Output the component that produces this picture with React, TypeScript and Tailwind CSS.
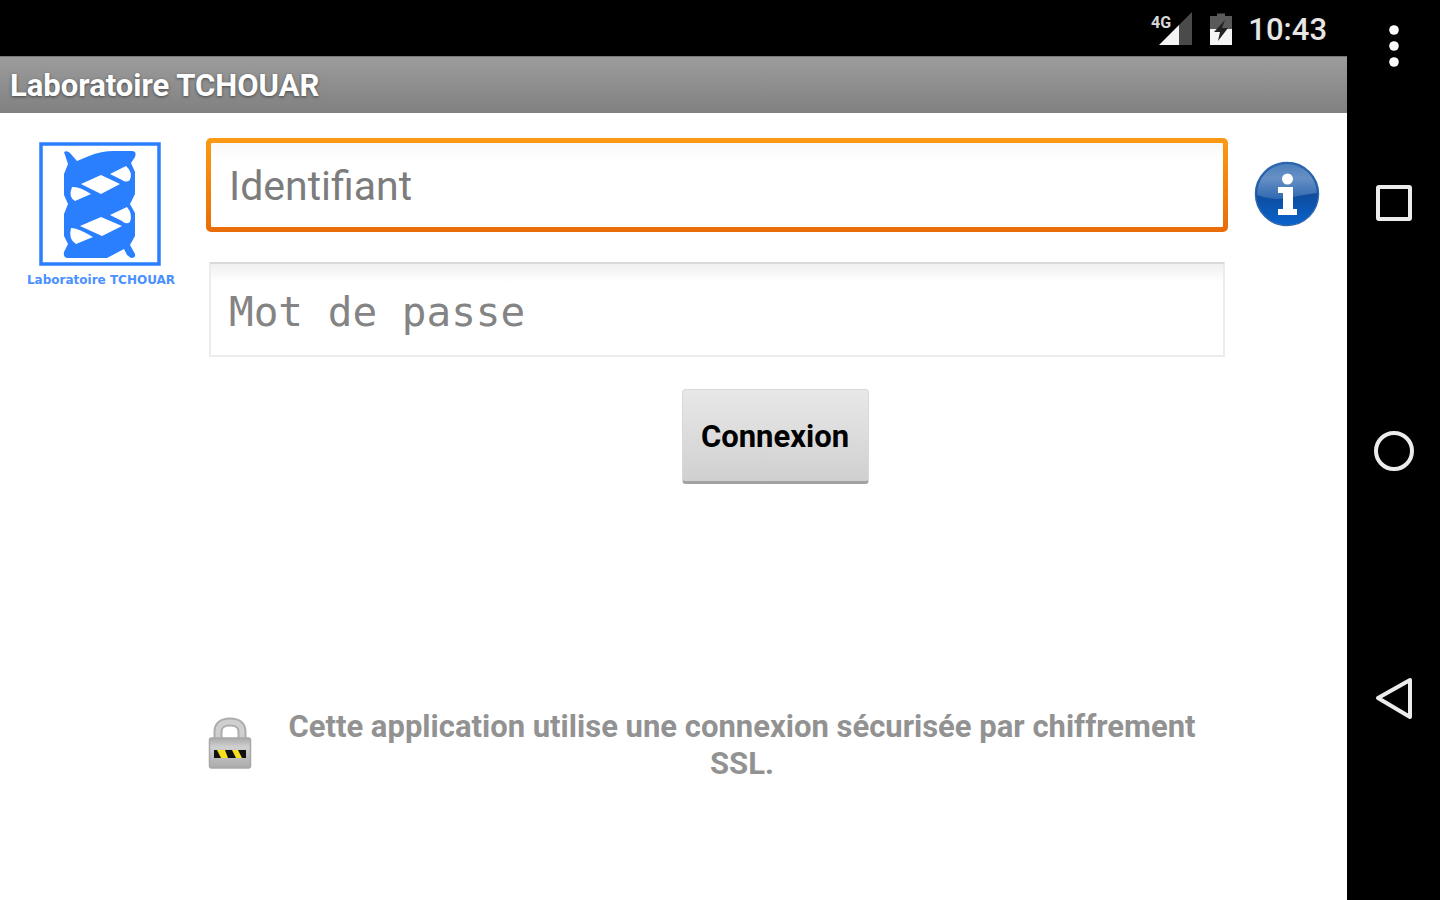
import React from "react";

function SignalIcon() {
  return (
    <svg viewBox="0 0 44 36" className="h-9 w-11" aria-hidden="true">
      <path d="M43 0V33H30V13Z" fill="#4a4a4a" />
      <path d="M30 13V33H10Z" fill="#f4f4f4" />
      <text x="2" y="16" fill="#d8d8d8" fontFamily="Roboto, sans-serif" fontSize="16" fontWeight="700">
        4G
      </text>
    </svg>
  );
}

function BatteryIcon() {
  return (
    <svg viewBox="0 0 24 34" className="h-[34px] w-6" aria-hidden="true">
      <path d="M8 0.500H16V3H23V16H1V3H8Z" fill="#5a5a5a" />
      <path d="M1 16H23V32H1Z" fill="#f4f4f4" />
      <path d="M16 7L5 19H11L9 28L19 15H13Z" fill="#222" />
    </svg>
  );
}

function LogoIcon() {
  return (
    <svg viewBox="0 0 122 124" className="h-[124px] w-[122px]" aria-hidden="true">
      <rect x="2" y="2" width="118" height="120" fill="none" stroke="#2a7fff" strokeWidth="3.500" />
      <path
        d="M25 10Q28 8 31 11L38 19L50 14Q62 9 75 9H93Q98 9 96 15L92 21L96 30V52L91 62L96 71V94L91 103L96 112Q97 116 92 116L88 113L85 107L68 116H29Q24 116 25 110L29 102L25 94V72L29 62L25 53V32L29 22Z"
        fill="#2a7fff"
      />
      <path
        d="M42 42L62 33L81 42L62 52ZM71 32L87 24Q94 30 91 38Q87 41 83 38ZM33 45Q40 44 52 52L36 59Q29 55 33 45ZM41 84L62 75L83 84L63 94ZM71 73L88 65Q94 72 91 80Q87 83 83 79ZM32 86Q39 86 54 95L37 102Q29 97 32 86Z"
        fill="#fff"
      />
    </svg>
  );
}

function InfoIcon() {
  return (
    <svg viewBox="0 0 66 66" className="h-[66px] w-[66px]" aria-hidden="true">
      <defs>
        <linearGradient id="infoBase" x1="0" y1="0" x2="0" y2="1">
          <stop offset="0" stopColor="#2e66ab" />
          <stop offset="0.500" stopColor="#0f4c9c" />
          <stop offset="1" stopColor="#0863cc" />
        </linearGradient>
        <linearGradient id="infoGloss" x1="0" y1="0" x2="0" y2="1">
          <stop offset="0" stopColor="#4d7fbb" />
          <stop offset="0.400" stopColor="#6690c5" />
          <stop offset="1" stopColor="#3068b0" />
        </linearGradient>
      </defs>
      <circle cx="33" cy="33" r="31.500" fill="url(#infoBase)" stroke="#2c66ad" strokeWidth="1.500" />
      <path d="M3 34A30 30 0 0 1 63 32Q48 34 33 37Q18 40 3 34Z" fill="url(#infoGloss)" />
      <circle cx="33.500" cy="18" r="5.500" fill="#fff" />
      <path d="M24 26H39V48H43V54H24V48H29V32H24Z" fill="#fff" />
    </svg>
  );
}

function LockIcon() {
  return (
    <svg viewBox="0 0 44 54" className="h-[54px] w-11 shrink-0" aria-hidden="true">
      <defs>
        <linearGradient id="lockBody" x1="0" y1="0" x2="0" y2="1">
          <stop offset="0" stopColor="#a9a9a9" />
          <stop offset="0.300" stopColor="#d0d0d0" />
          <stop offset="1" stopColor="#aaa" />
        </linearGradient>
        <clipPath id="lockBand">
          <rect x="6" y="34" width="32" height="8" />
        </clipPath>
      </defs>
      <path d="M10 24V16Q10 6 22 6Q34 6 34 16V24" fill="none" stroke="#acacac" strokeWidth="9" />
      <path d="M10 24V16Q10 6 22 6Q34 6 34 16V24" fill="none" stroke="#cfcfcf" strokeWidth="5" />
      <rect x="1.500" y="22" width="41" height="30" rx="2" fill="url(#lockBody)" stroke="#a8a8a8" strokeWidth="1.500" />
      <g clipPath="url(#lockBand)">
        <rect x="6" y="34" width="32" height="8" fill="#f4e11c" />
        <path d="M4 34H9L13 42H4ZM17 34H24L28 42H20ZM30 34H38V42H34Z" fill="#111" />
      </g>
    </svg>
  );
}

function StatusBar() {
  return (
    <div className="flex h-14 items-center justify-end bg-black pt-1 pr-5 text-[#e6e6e6]">
      <SignalIcon />
      <span className="ml-4 flex">
        <BatteryIcon />
      </span>
      <time className="ml-[15px] text-[31px] leading-9 font-medium">10:43</time>
    </div>
  );
}

function SystemNav() {
  const item = "flex flex-1 items-center justify-center";
  return (
    <nav className="flex w-[93px] shrink-0 flex-col bg-black pb-[78px]" aria-label="Navigation">
      <button type="button" aria-label="Menu" className="flex h-[79px] items-center justify-center pt-3">
        <svg viewBox="0 0 12 44" className="h-11 w-3" fill="#fff">
          <circle cx="6" cy="6" r="4.800" />
          <circle cx="6" cy="22" r="4.800" />
          <circle cx="6" cy="38" r="4.800" />
        </svg>
      </button>
      <button type="button" aria-label="Applications" className={item}>
        <svg viewBox="0 0 44 44" className="h-11 w-11" fill="none" stroke="#ececec" strokeWidth="4">
          <rect x="6" y="6" width="32" height="32" rx="1" />
        </svg>
      </button>
      <button type="button" aria-label="Accueil" className={item}>
        <svg viewBox="0 0 44 44" className="h-11 w-11" fill="none" stroke="#ececec" strokeWidth="4">
          <circle cx="22" cy="22" r="18" />
        </svg>
      </button>
      <button type="button" aria-label="Retour" className={item}>
        <svg viewBox="0 0 44 44" className="h-11 w-11" fill="none" stroke="#ececec" strokeWidth="4" strokeLinejoin="round">
          <path d="M38 4V41L6 22Z" />
        </svg>
      </button>
    </nav>
  );
}

export default function App() {
  return (
    <div className="flex min-h-screen bg-white font-[Roboto,sans-serif]">
      <div className="flex min-w-0 flex-1 flex-col">
        <StatusBar />
        <header className="flex h-[57px] items-center border-t border-[#777] bg-linear-to-b from-[#9c9c9c] to-[#808080] pt-[2px] pl-[10px]">
          <h1 className="text-[31px] leading-9 font-bold text-white [text-shadow:0_1px_3px_#444]">Laboratoire TCHOUAR</h1>
        </header>
        <main>
          <form onSubmit={(e) => e.preventDefault()}>
            <div className="flex pt-[25px]">
              <div className="flex w-[206px] shrink-0 flex-col items-center pt-1 pr-[6px]">
                <LogoIcon />
                <span className="mt-[6px] pl-[2px] text-[12px] leading-4 font-bold whitespace-nowrap text-[#4a90ff] font-['DejaVu_Sans',sans-serif]">
                  Laboratoire TCHOUAR
                </span>
              </div>
              <div className="flex min-w-0 flex-1 flex-col gap-[30px]">
                <div className="rounded-[5px] bg-linear-to-b from-[#fb9a14] to-[#e86c08] p-[5px]">
                  <input
                    type="text"
                    aria-label="Identifiant"
                    placeholder="Identifiant"
                    className="block h-[84px] w-full rounded-[1px] bg-linear-to-b from-[#f8f8f8] to-white to-20% px-[18px] pt-[2px] text-[41px] text-[#7c7c7c] outline-none placeholder:text-[#7c7c7c]"
                  />
                </div>
                <div className="px-[3px]">
                  <input
                    type="password"
                    aria-label="Mot de passe"
                    placeholder="Mot de passe"
                    className="block h-[95px] w-full border-2 border-[#ececec] border-t-[#dadada] bg-linear-to-b from-[#f0f0f0] to-white to-20% px-[18px] pt-1 font-['DejaVu_Sans_Mono',monospace] text-[41px] text-[#848484] outline-none placeholder:text-[#848484]"
                  />
                </div>
              </div>
              <div className="flex w-[119px] shrink-0 items-start pt-[23px] pl-[26px]">
                <button type="button" aria-label="Informations">
                  <InfoIcon />
                </button>
              </div>
            </div>
            <div className="flex justify-center pt-8 pl-[203px]">
              <button
                type="submit"
                className="h-[95px] w-[187px] rounded-[4px] border border-b-[3px] border-[#d8d8d8] border-b-[#a2a2a2] bg-linear-to-b from-[#e8e8e8] to-[#d0d0d0] pt-1 text-[31px] font-bold text-black"
              >
                Connexion
              </button>
            </div>
          </form>
          <div className="mt-[224px] mr-[119px] ml-[208px] flex items-start">
            <span className="pt-2">
              <LockIcon />
            </span>
            <p className="flex-1 pl-5 pr-4 text-center text-[31px] leading-[37px] font-bold text-[#929292]">
              Cette application utilise une connexion sécurisée par chiffrement SSL.
            </p>
          </div>
        </main>
      </div>
      <SystemNav />
    </div>
  );
}
